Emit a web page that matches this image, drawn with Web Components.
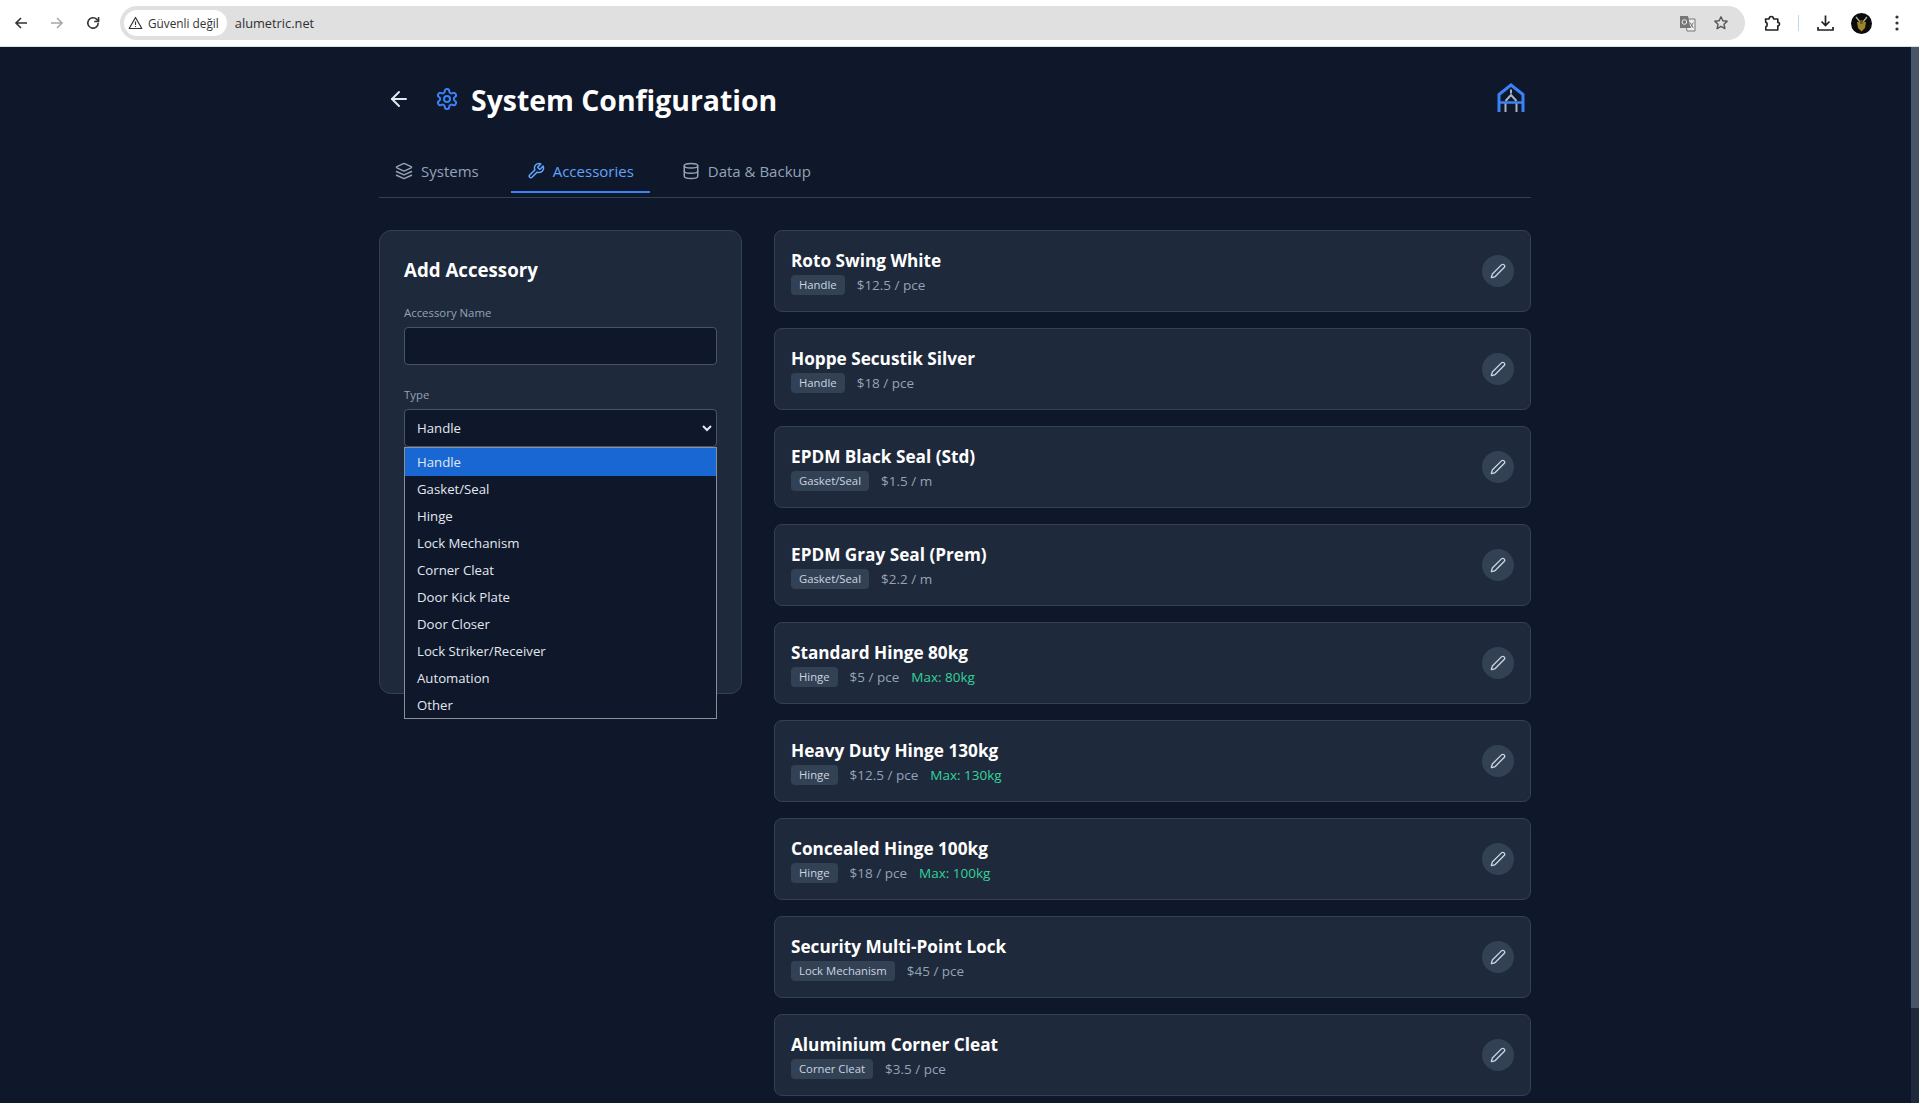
<!DOCTYPE html>
<html>
<head>
<meta charset="utf-8">
<style>
  html, body { margin: 0; height: 100%; overflow: hidden; background: #0f172a; }
  body { font-family: "Open Sans", "Noto Sans", sans-serif; display: flex; flex-direction: column; }
</style>
</head>
<body>
<browser-bar></browser-bar>
<config-page>
  <config-tabs slot="tabs"></config-tabs>
  <accessory-form slot="form"></accessory-form>
  <accessory-list slot="list"></accessory-list>
</config-page>

<script>
const FONT = '"Open Sans", "Noto Sans", sans-serif';

class BrowserBar extends HTMLElement {
  constructor() {
    super();
    this.attachShadow({ mode: 'open' });
    this.shadowRoot.innerHTML = `
      <style>
        :host { display: flex; align-items: center; height: 47px; background: #fff; flex: none; font-family: ${FONT}; box-sizing: border-box; border-bottom: 1px solid #d5e3e8; }
        svg { display: block; flex: none; }
        .nav { display: flex; align-items: center; gap: 20px; margin-left: 13px; width: 107px; }
        .omni { flex: 1; height: 34px; background: #e0e0e0; border-radius: 17px; display: flex; align-items: center; padding: 0 16px 0 4px; box-sizing: border-box; }
        .chip { display: flex; align-items: center; gap: 5px; height: 26px; background: #fff; border-radius: 13px; padding: 0 8px 0 4px; font-size: 11.8px; color: #333; }
        .url { margin-left: 8px; font-size: 12.8px; color: #303030; flex: 1; }
        .omni-r { display: flex; align-items: center; gap: 17px; }
        .tools { display: flex; align-items: center; margin-left: 19px; margin-right: 20px; }
        .sep { width: 1px; height: 16px; background: #b9dde5; margin: 0 18px 0 17px; }
        .avatar { margin: 0 23px 0 17px; }
      </style>
      <div class="nav">
        <svg width="16" height="16" viewBox="0 0 16 16" fill="none" stroke="#333" stroke-width="1.6"><path d="M14 8H3M8 3 3 8l5 5"/></svg>
        <svg width="16" height="16" viewBox="0 0 16 16" fill="none" stroke="#a8a8a8" stroke-width="1.6"><path d="M2 8h11M8 3l5 5-5 5"/></svg>
        <svg width="16" height="16" viewBox="0 0 16 16" fill="none" stroke="#333" stroke-width="1.6"><path d="M13.2 8a5.2 5.2 0 1 1-1.6-3.8L13.4 6"/><path d="M13.6 2v4.4H9.2" stroke-width="1.5"/></svg>
      </div>
      <div class="omni">
        <div class="chip">
          <svg width="15" height="14" viewBox="0 0 15 14" fill="none" stroke="#333" stroke-width="1.2"><path d="M7.5 1.5 1.2 12.5h12.6z" stroke-linejoin="round"/><path d="M7.5 5.5v3.4M7.5 10v1"/></svg>
          <span>Güvenli değil</span>
        </div>
        <span class="url">alumetric.net</span>
        <div class="omni-r">
          <svg width="17" height="17" viewBox="0 0 17 17"><path d="M6 4h10v12H8z" fill="#eee" stroke="#777" stroke-width="1"/><path d="M1 1h8l2.6 12H1z" fill="#777"/><circle cx="5.4" cy="7" r="2.3" fill="none" stroke="#eee" stroke-width="1"/><path d="M11 7.5l3.4 5.5M14.4 7.5 11 13" stroke="#777" stroke-width="1"/></svg>
          <svg width="16" height="16" viewBox="0 0 16 16" fill="none" stroke="#555" stroke-width="1.4"><path d="M8 1.8l1.9 4 4.3.5-3.2 3 .9 4.3L8 11.4l-3.9 2.2.9-4.3-3.2-3 4.3-.5z" stroke-linejoin="round"/></svg>
        </div>
      </div>
      <div class="tools">
        <svg width="17" height="17" viewBox="0 0 17 17" fill="none" stroke="#222" stroke-width="1.6"><path d="M1.5 4h3.6c0-3.4 4.5-3.4 4.5 0h4.2v3.4c2.4 0 2.4 3.4 0 3.4V15h-12v-3.2c1.8 0 1.8-4.4 0-4.4z" stroke-linejoin="round"/></svg>
        <div class="sep"></div>
        <svg width="17" height="18" viewBox="0 0 17 18" fill="none" stroke="#222" stroke-width="1.7"><path d="M8.5 1.5V11M4.5 7.5l4 4 4-4M1 13v3h15v-3"/></svg>
        <svg class="avatar" width="21" height="21" viewBox="0 0 21 21"><circle cx="10.5" cy="10.5" r="10.5" fill="#0b0b0b"/><path d="M6 9h9l-1 6-3.500 3.500L7 15z" fill="#a08428"/><path d="M5 4l4 5M16 4l-4 5" stroke="#b5b09a" stroke-width="1.300"/><circle cx="10.500" cy="9" r="2" fill="#6b5a1e"/></svg>
        <svg width="4" height="16" viewBox="0 0 4 16" fill="#333"><circle cx="2" cy="2" r="1.600"/><circle cx="2" cy="8" r="1.600"/><circle cx="2" cy="14" r="1.600"/></svg>
      </div>
    `;
  }
}

class ConfigPage extends HTMLElement {
  constructor() {
    super();
    this.attachShadow({ mode: 'open' });
    this.shadowRoot.innerHTML = `
      <style>
        :host { display: flex; flex: 1; min-height: 0; background: #0f172a; font-family: ${FONT}; color: #fff; overflow: hidden; }
        .main { flex: 1; min-width: 0; display: flex; justify-content: center; }
        .wrap { width: 1152px; padding-top: 34px; box-sizing: border-box; }
        header { display: flex; align-items: center; height: 38px; padding-right: 6px; }
        .back { margin-left: 8px; margin-right: 24px; display: block; margin-bottom: 2px; }
        .gear { margin-right: 12px; display: block; margin-bottom: 2px; }
        .logo { display: block; margin-bottom: 5px; }
        h1 { margin: 0; font-size: 28.4px; font-weight: 700; line-height: 38px; flex: 1; }
        .grid { display: grid; grid-template-columns: 363px 757px; gap: 32px; margin-top: 32px; }
        .bar { width: 8px; flex: none; background: #1e293b; border-left: 1px solid #0f172a; }
        .thumb { height: 961px; background: #475569; }
      </style>
      <div class="main">
        <div class="wrap">
          <header>
            <svg class="back" width="24" height="24" viewBox="0 0 24 24" fill="none" stroke="#e2e8f0" stroke-width="2" stroke-linecap="round" stroke-linejoin="round"><path d="m12 19-7-7 7-7"/><path d="M19 12H5"/></svg>
            <svg class="gear" width="24" height="24" viewBox="0 0 24 24" fill="none" stroke="#3b82f6" stroke-width="2" stroke-linecap="round" stroke-linejoin="round"><path d="M12.22 2h-.44a2 2 0 0 0-2 2v.18a2 2 0 0 1-1 1.73l-.43.25a2 2 0 0 1-2 0l-.15-.08a2 2 0 0 0-2.73.73l-.22.38a2 2 0 0 0 .73 2.73l.15.1a2 2 0 0 1 1 1.72v.51a2 2 0 0 1-1 1.74l-.15.09a2 2 0 0 0-.73 2.73l.22.38a2 2 0 0 0 2.73.73l.15-.08a2 2 0 0 1 2 0l.43.25a2 2 0 0 1 1 1.73V20a2 2 0 0 0 2 2h.44a2 2 0 0 0 2-2v-.18a2 2 0 0 1 1-1.73l.43-.25a2 2 0 0 1 2 0l.15.08a2 2 0 0 0 2.73-.73l.22-.39a2 2 0 0 0-.73-2.73l-.15-.08a2 2 0 0 1-1-1.74v-.5a2 2 0 0 1 1-1.74l.15-.09a2 2 0 0 0 .73-2.73l-.22-.38a2 2 0 0 0-2.73-.73l-.15.08a2 2 0 0 1-2 0l-.43-.25a2 2 0 0 1-1-1.73V4a2 2 0 0 0-2-2z"/><circle cx="12" cy="12" r="3"/></svg>
            <h1>System Configuration</h1>
            <svg class="logo" width="28" height="30" viewBox="0 0 28 30" fill="none"><path d="M8.500 29V19.500M19.500 29V19.500M8.500 18l5.500-6 5.500 6" stroke="#a9b4c4" stroke-width="2"/><path d="M14 6.500v4" stroke="#a9b4c4" stroke-width="2"/><path d="M2 29V11.500L14 2l12 9.500V29" stroke="#3b82f6" stroke-width="3"/><path d="M2 19.500h24" stroke="#3b82f6" stroke-width="2.500"/></svg>
          </header>
          <slot name="tabs"></slot>
          <div class="grid">
            <div><slot name="form"></slot></div>
            <div><slot name="list"></slot></div>
          </div>
        </div>
      </div>
      <div class="bar"><div class="thumb"></div></div>
    `;
  }
}

class ConfigTabs extends HTMLElement {
  constructor() {
    super();
    this.attachShadow({ mode: 'open' });
    this.shadowRoot.innerHTML = `
      <style>
        :host { display: flex; gap: 16px; margin-top: 33px; padding-bottom: 4px; border-bottom: 1px solid #334155; font-size: 15px; }
        .tab { display: flex; align-items: center; gap: 8px; padding: 0 16px 2px; color: #94a3b8; height: 41px; box-sizing: border-box; border-bottom: 2px solid transparent; }
        .on { color: #60a5fa; border-bottom-color: #3b82f6; }
        svg { display: block; }
      </style>
      <div class="tab">
        <svg width="18" height="18" viewBox="0 0 24 24" fill="none" stroke="currentColor" stroke-width="2" stroke-linecap="round" stroke-linejoin="round"><path d="M12.830 2.180a2 2 0 0 0-1.660 0L2.600 6.080a1 1 0 0 0 0 1.830l8.580 3.910a2 2 0 0 0 1.660 0l8.580-3.900a1 1 0 0 0 0-1.830z"/><path d="m22 17.650-9.170 4.160a2 2 0 0 1-1.660 0L2 17.650"/><path d="m22 12.650-9.170 4.160a2 2 0 0 1-1.660 0L2 12.650"/></svg>
        Systems
      </div>
      <div class="tab on">
        <svg width="18" height="18" viewBox="0 0 24 24" fill="none" stroke="currentColor" stroke-width="2" stroke-linecap="round" stroke-linejoin="round"><path d="M14.700 6.300a1 1 0 0 0 0 1.400l1.600 1.600a1 1 0 0 0 1.400 0l3.770-3.770a6 6 0 0 1-7.940 7.940l-6.910 6.910a2.120 2.120 0 0 1-3-3l6.910-6.910a6 6 0 0 1 7.940-7.940l-3.760 3.760z"/></svg>
        Accessories
      </div>
      <div class="tab">
        <svg width="18" height="18" viewBox="0 0 24 24" fill="none" stroke="currentColor" stroke-width="2" stroke-linecap="round" stroke-linejoin="round"><ellipse cx="12" cy="5" rx="9" ry="3"/><path d="M3 5v14a9 3 0 0 0 18 0V5"/><path d="M3 12a9 3 0 0 0 18 0"/></svg>
        Data &amp; Backup
      </div>
    `;
  }
}

class AccessoryForm extends HTMLElement {
  constructor() {
    super();
    this.attachShadow({ mode: 'open' });
    const types = ['Handle', 'Gasket/Seal', 'Hinge', 'Lock Mechanism', 'Corner Cleat', 'Door Kick Plate', 'Door Closer', 'Lock Striker/Receiver', 'Automation', 'Other'];
    this.shadowRoot.innerHTML = `
      <style>
        :host { display: block; background: #1e293b; border: 1px solid #334155; border-radius: 12px; padding: 24px; height: 464px; box-sizing: border-box; position: relative; }
        h2 { margin: 0 0 22px; font-size: 18.7px; font-weight: 700; line-height: 28px; color: #fff; position: relative; top: 1px; }
        label { display: block; font-size: 11.4px; line-height: 16px; color: #94a3b8; margin-bottom: 6px; }
        .input, .select { height: 38px; box-sizing: border-box; background: #0f172a; border: 1px solid #475569; border-radius: 4px; }
        .input { margin-bottom: 22px; }
        .select { display: flex; align-items: center; justify-content: space-between; padding: 0 4px 0 12px; font-size: 13.2px; color: #e2e8f0; }
        svg { display: block; }
        .menu { position: absolute; left: 24px; right: 24px; top: 216px; border: 1px solid #8a8f98; background: #0f172a; font-size: 13.2px; color: #e2e8f0; z-index: 5; }
        .opt { height: 27px; line-height: 27px; padding-left: 12px; }
        .opt.sel { background: #1967d2; height: 28px; line-height: 28px; }
        .menu .opt:last-child { height: 26px; }
      </style>
      <h2>Add Accessory</h2>
      <label>Accessory Name</label>
      <div class="input"></div>
      <label>Type</label>
      <div class="select">
        <span>Handle</span>
        <svg width="10" height="7" viewBox="0 0 10 7" fill="none" stroke="#e2e8f0" stroke-width="2"><path d="m1 1 4 4 4-4"/></svg>
      </div>
      <div class="menu">
        ${types.map((t, i) => `<div class="opt${i === 0 ? ' sel' : ''}">${t}</div>`).join('')}
      </div>
    `;
  }
}

class AccessoryCard extends HTMLElement {
  connectedCallback() {
    if (this.shadowRoot) return;
    this.attachShadow({ mode: 'open' });
    const max = this.getAttribute('max');
    this.shadowRoot.innerHTML = `
      <style>
        :host { display: flex; align-items: center; justify-content: space-between; height: 82px; box-sizing: border-box; background: #1e293b; border: 1px solid #334155; border-radius: 8px; padding: 0 16px; flex: none; }
        .name { font-size: 17.2px; font-weight: 700; line-height: 28px; color: #fff; }
        .meta { display: flex; align-items: center; gap: 12px; font-size: 13.5px; line-height: 20px; color: #94a3b8; }
        .tag { background: #334155; color: #cbd5e1; font-size: 11.3px; line-height: 16px; padding: 2px 8px; border-radius: 4px; }
        .max { color: #34d399; }
        .edit { width: 32px; height: 32px; border-radius: 50%; background: #334155; display: flex; align-items: center; justify-content: center; margin-bottom: 1px; }
        svg { display: block; }
      </style>
      <div>
        <div class="name">${this.getAttribute('name')}</div>
        <div class="meta">
          <span class="tag">${this.getAttribute('type')}</span>
          <span>${this.getAttribute('price')}</span>
          ${max ? `<span class="max">Max: ${max}</span>` : ''}
        </div>
      </div>
      <div class="edit">
        <svg width="16" height="16" viewBox="0 0 24 24" fill="none" stroke="#cbd5e1" stroke-width="2" stroke-linecap="round" stroke-linejoin="round"><path d="M21.174 6.812a1 1 0 0 0-3.986-3.987L3.842 16.174a2 2 0 0 0-.5.83l-1.321 4.352a.5.5 0 0 0 .623.622l4.353-1.320a2 2 0 0 0 .83-.497z"/></svg>
      </div>
    `;
  }
}

class AccessoryList extends HTMLElement {
  constructor() {
    super();
    this.attachShadow({ mode: 'open' });
    const items = [
      ['Roto Swing White', 'Handle', '$12.5 / pce'],
      ['Hoppe Secustik Silver', 'Handle', '$18 / pce'],
      ['EPDM Black Seal (Std)', 'Gasket/Seal', '$1.5 / m'],
      ['EPDM Gray Seal (Prem)', 'Gasket/Seal', '$2.2 / m'],
      ['Standard Hinge 80kg', 'Hinge', '$5 / pce', '80kg'],
      ['Heavy Duty Hinge 130kg', 'Hinge', '$12.5 / pce', '130kg'],
      ['Concealed Hinge 100kg', 'Hinge', '$18 / pce', '100kg'],
      ['Security Multi-Point Lock', 'Lock Mechanism', '$45 / pce'],
      ['Aluminium Corner Cleat', 'Corner Cleat', '$3.5 / pce']
    ];
    this.shadowRoot.innerHTML = `
      <style>
        :host { display: flex; flex-direction: column; gap: 16px; }
      </style>
      ${items.map(([n, t, p, m]) => `<accessory-card name="${n}" type="${t}" price="${p}"${m ? ` max="${m}"` : ''}></accessory-card>`).join('')}
    `;
  }
}

customElements.define('browser-bar', BrowserBar);
customElements.define('config-page', ConfigPage);
customElements.define('config-tabs', ConfigTabs);
customElements.define('accessory-form', AccessoryForm);
customElements.define('accessory-card', AccessoryCard);
customElements.define('accessory-list', AccessoryList);
</script>
</body>
</html>
